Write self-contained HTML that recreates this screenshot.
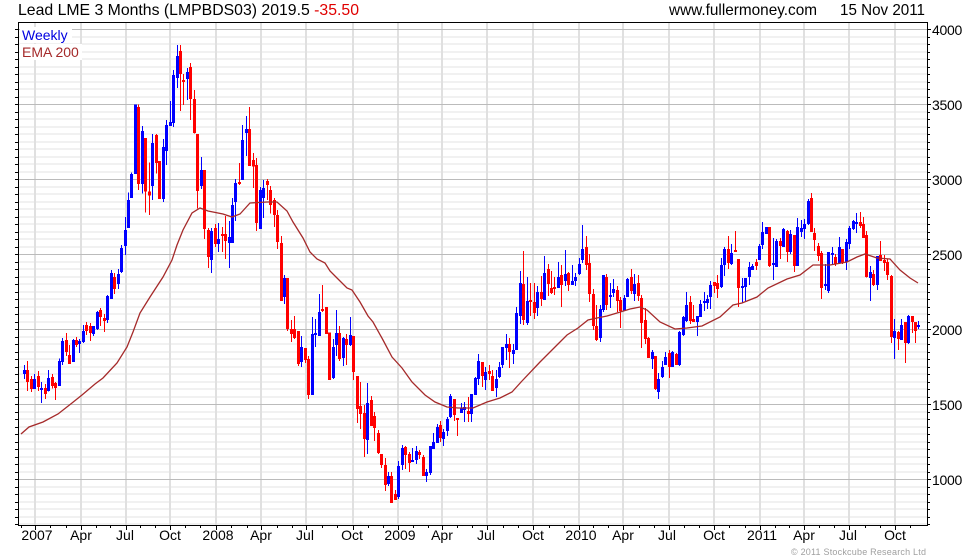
<!DOCTYPE html>
<html><head><meta charset="utf-8"><title>Lead LME 3 Months</title>
<style>
html,body{margin:0;padding:0;background:#fff}
svg{display:block}
text{font-family:"Liberation Sans",Arial,sans-serif}
</style></head><body>
<svg width="980" height="560" viewBox="0 0 980 560" xmlns="http://www.w3.org/2000/svg">
<rect width="980" height="560" fill="#fff"/>
<g shape-rendering="crispEdges" fill="none">
<path stroke="#f1f1f1" stroke-width="2" d="M19 37H927M19 44H927M19 52H927M19 59H927M19 67H927M19 74H927M19 82H927M19 89H927M19 97H927M19 112H927M19 119H927M19 127H927M19 134H927M19 142H927M19 149H927M19 157H927M19 164H927M19 172H927M19 187H927M19 194H927M19 202H927M19 209H927M19 217H927M19 224H927M19 232H927M19 239H927M19 247H927M19 262H927M19 269H927M19 277H927M19 284H927M19 292H927M19 299H927M19 307H927M19 314H927M19 322H927M19 337H927M19 344H927M19 352H927M19 359H927M19 367H927M19 374H927M19 382H927M19 389H927M19 397H927M19 412H927M19 419H927M19 427H927M19 434H927M19 442H927M19 449H927M19 457H927M19 464H927M19 472H927M19 487H927M19 494H927M19 502H927M19 509H927M19 517H927M19 524H927"/>
<path stroke="#e0e0e0" stroke-width="2" d="M35 23V525M81 23V525M126 23V525M170 23V525M216 23V525M261 23V525M306 23V525M353 23V525M398 23V525M442 23V525M487 23V525M533 23V525M579 23V525M623 23V525M669 23V525M714 23V525M760 23V525M804 23V525M849 23V525M895 23V525"/>
<path stroke="#bbb" stroke-width="1" d="M19 29.5H927M19 104.5H927M19 179.5H927M19 254.5H927M19 329.5H927M19 404.5H927M19 479.5H927"/>
</g>
<g transform="scale(.33333333) translate(.5 0)" shape-rendering="crispEdges" fill="none">
<path stroke="#f00" stroke-width="3" d="M82 1083V1173M94 1128V1176M115 1113V1173M136 1152V1197M157 1122V1165M166 1146V1200M199 999V1068M208 1035V1092M229 1011V1041M259 966V1005M271 969V1023M301 924V978M313 942V996M343 819V882M415 313V570M436 414V638M448 487V645M469 402V520M478 483V597M541 135V333M550 222V315M571 189V360M583 270V400M592 402V625M613 510V717M625 684V804M646 672V741M667 681V756M676 648V777M718 489V555M748 321V498M760 459V564M769 474V693M802 537V600M811 558V640M823 594V681M832 630V747M844 708V903M862 834V993M874 960V1026M883 948V1017M895 993V1098M916 1044V1089M925 1068V1197M967 855V936M979 921V1002M988 997V1140M1018 978V1083M1039 1002V1095M1060 1008V1140M1072 1128V1269M1081 1146V1287M1093 1215V1371M1114 1188V1278M1123 1236V1323M1135 1290V1362M1144 1362V1404M1156 1374V1473M1174 1416V1509M1186 1470V1500M1216 1338V1407M1228 1356V1416M1258 1350V1377M1270 1365V1428M1321 1263V1326M1363 1197V1263M1372 1254V1308M1405 1191V1266M1447 1086V1161M1468 1095V1140M1477 1110V1173M1528 1014V1104M1570 753V975M1591 849V948M1603 849V957M1624 828V918M1645 792V888M1654 813V882M1663 831V885M1684 795V921M1705 816V873M1759 708V810M1768 762V906M1780 867V990M1789 915V1023M1819 822V930M1852 858V936M1861 891V984M1894 807V882M1915 825V903M1924 885V1044M1936 924V1032M1945 1011V1074M1966 1068V1170M2008 1050V1134M2029 1059V1095M2071 888V972M2080 915V966M2143 846V879M2152 825V894M2185 708V807M2206 693V756M2215 777V921M2269 777V810M2308 681V801M2341 714V777M2362 690V786M2383 705V816M2434 579V696M2443 684V753M2455 729V783M2464 753V897M2506 762V798M2527 747V792M2581 636V684M2590 651V714M2599 693V832M2620 810V858M2641 723V783M2653 765V813M2662 777V840M2674 825V1029M2695 993V1050M2716 966V1089M2737 948V999M2746 966V1029"/>
<path stroke="#f00" stroke-width="9" d="M82 1110V1146M94 1137V1167M115 1128V1161M136 1164V1182M157 1131V1158M166 1149V1164M199 1020V1056M208 1065V1092M229 1020V1035M259 975V993M271 978V999M301 930V951M313 954V963M343 831V867M415 321V552M436 414V575M448 575V587M469 405V489M478 483V597M541 153V222M550 240V246M571 201V297M583 297V399M592 402V573M613 510V687M625 690V771M646 684V732M667 702V708M676 702V723M718 546V552M748 387V498M760 480V500M769 495V669M802 543V555M811 570V615M823 600V645M832 645V726M844 729V903M862 834V987M874 987V1002M883 987V1014M895 993V1092M916 1044V1080M925 1077V1185M967 927V933M979 921V1002M988 997V1140M1018 999V1077M1039 1017V1035M1060 1008V1116M1072 1128V1227M1081 1218V1242M1093 1239V1317M1114 1200V1278M1123 1248V1284M1135 1299V1359M1144 1362V1395M1156 1395V1455M1174 1428V1509M1186 1482V1500M1216 1341V1365M1228 1362V1389M1258 1356V1365M1270 1371V1428M1321 1275V1314M1363 1197V1245M1372 1254V1260M1405 1233V1242M1447 1086V1128M1468 1113V1122M1477 1128V1173M1528 1032V1056M1570 852V960M1591 900V906M1603 906V939M1624 876V897M1645 807V852M1654 864V879M1663 861V867M1684 825V855M1705 819V855M1759 741V795M1768 789V882M1780 882V978M1789 978V1020M1819 831V915M1852 870V903M1861 900V933M1894 831V873M1915 849V888M1924 894V969M1936 960V1017M1945 1014V1074M1966 1068V1167M2008 1059V1101M2029 1062V1095M2071 906V963M2080 957V966M2143 846V858M2152 849V867M2185 747V789M2206 750V756M2215 777V864M2269 786V798M2308 681V798M2341 723V738M2362 693V756M2383 705V798M2434 594V696M2443 699V720M2455 738V768M2464 759V864M2506 771V792M2527 747V789M2581 666V678M2590 672V714M2599 705V831M2620 822V855M2641 765V783M2653 780V789M2662 786V825M2674 828V1011M2695 996V1017M2716 966V1029M2737 948V966M2746 966V993"/>
<path stroke="#00f" stroke-width="3" d="M73 1095V1137M103 1122V1167M124 1146V1209M145 1110V1175M178 1075V1158M187 1014V1095M220 1017V1086M238 1017V1059M250 975V1029M280 978V1008M292 933V990M322 885V969M334 810V897M355 807V867M364 735V819M376 651V765M385 578V684M394 518V594M406 313V522M427 378V580M457 402V600M490 417V606M499 360V495M511 303V378M520 210V381M532 135V264M562 204V300M604 471V567M634 684V819M655 669V756M688 663V804M697 594V729M706 537V663M727 375V540M739 348V468M781 561V687M790 540V654M853 825V912M904 1008V1101M937 951V1185M946 957V1041M958 882V1008M1000 1017V1137M1009 930V1068M1030 1011V1098M1051 951V1038M1102 1149V1362M1165 1416V1458M1195 1383V1497M1207 1335V1410M1237 1344V1386M1249 1338V1392M1279 1407V1446M1291 1338V1425M1300 1299V1347M1312 1272V1329M1330 1287V1338M1342 1251V1308M1351 1182V1254M1384 1209V1239M1393 1206V1266M1414 1182V1266M1426 1131V1185M1435 1062V1155M1456 1101V1170M1489 1110V1191M1498 1086V1134M1507 1041V1104M1519 1002V1080M1540 1032V1092M1549 921V1050M1561 813V972M1582 831V975M1612 858V948M1633 768V900M1675 786V864M1696 750V858M1717 795V855M1726 819V858M1738 774V825M1747 675V789M1801 915V1026M1810 825V936M1831 849V924M1840 837V891M1873 885V933M1882 834V891M1903 822V903M1957 1050V1107M1975 1119V1197M1987 1083V1134M1996 1056V1095M2017 1053V1101M2038 993V1098M2050 948V1008M2059 876V966M2092 948V1008M2101 900V951M2113 876V933M2122 885V927M2131 843V927M2164 774V864M2173 741V828M2194 732V795M2227 834V909M2236 834V903M2248 786V855M2257 792V810M2278 732V780M2287 666V747M2299 681V702M2320 714V840M2329 717V801M2350 684V741M2371 690V762M2392 654V798M2404 660V711M2413 657V717M2425 597V675M2476 792V870M2485 756V879M2497 741V792M2518 711V792M2539 717V810M2548 678V747M2560 660V690M2569 639V699M2611 798V903M2632 768V870M2683 957V1077M2704 957V1020M2725 945V1032M2755 963V987"/>
<path stroke="#00f" stroke-width="9" d="M73 1110V1122M103 1137V1167M124 1164V1170M145 1134V1173M178 1083V1158M187 1023V1086M220 1020V1086M238 1023V1032M250 993V1026M280 978V1002M292 936V987M322 888V960M334 819V897M355 822V852M364 744V816M376 690V738M385 600V684M394 522V594M406 313V522M427 393V552M457 429V558M490 441V597M499 375V453M511 366V378M520 225V369M532 168V234M562 216V237M604 510V558M634 693V780M655 717V732M688 711V729M697 615V729M706 549V606M727 420V540M739 387V399M781 570V687M790 564V594M853 834V891M904 1041V1086M937 1002V1185M946 999V1005M958 936V1008M1000 1041V1134M1009 999V1035M1030 1014V1074M1051 1005V1035M1102 1209V1320M1165 1428V1452M1195 1398V1491M1207 1344V1395M1237 1380V1386M1249 1353V1380M1279 1416V1428M1291 1338V1419M1300 1326V1347M1312 1281V1329M1330 1296V1317M1342 1257V1293M1351 1188V1251M1384 1224V1239M1393 1221V1230M1414 1182V1242M1426 1134V1185M1435 1083V1137M1456 1116V1140M1489 1137V1164M1498 1101V1131M1507 1041V1095M1519 1032V1044M1540 1050V1062M1549 939V1050M1561 849V948M1582 903V969M1612 876V924M1633 819V900M1675 831V864M1696 822V843M1717 843V855M1726 831V843M1738 792V822M1747 747V780M1801 927V1014M1810 825V930M1831 885V891M1840 867V879M1873 894V933M1882 837V891M1903 852V882M1957 1056V1077M1975 1137V1176M1987 1101V1131M1996 1071V1095M2017 1056V1101M2038 996V1095M2050 951V1005M2059 915V963M2092 948V966M2101 912V951M2113 903V909M2122 897V909M2131 855V891M2164 795V861M2173 747V795M2194 759V792M2227 858V864M2236 834V861M2248 801V831M2257 798V810M2278 738V780M2287 696V735M2299 681V702M2320 789V795M2329 723V801M2350 687V741M2371 702V756M2392 681V798M2404 684V696M2413 672V687M2425 603V672M2476 852V858M2485 756V873M2497 759V765M2518 741V789M2539 726V786M2548 684V732M2560 663V687M2569 666V672M2611 816V834M2632 768V855M2683 993V1014M2704 975V1020M2725 948V1029M2755 975V981"/>
</g>
<path fill="none" stroke="#a52a2a" stroke-width="1.3" d="M21 434L29 427L43 422L58 414L72 403L82 395L95 384L103 378L117 363L127 347L133 332L140 313L150 297L163 277L172 260L177 245L183 230L192 213L200 208L208 211L223 214L232 217L240 214L250 203L267 202L277 202L287 211L293 222L303 238L310 252L317 259L325 263L330 271L337 278L347 288L352 290L360 302L368 316L373 322L383 340L392 357L402 368L412 382L425 395L435 402L447 407L458 408L473 408L487 402L500 398L512 392L522 381L540 362L557 345L567 335L578 328L588 320L597 318L607 316L617 313L630 309L640 307L647 310L660 322L675 329L687 328L702 326L720 317L733 305L742 303L757 297L768 288L787 279L800 275L813 265L830 265L847 262L857 257L865 254L877 258L890 259L900 270L910 278L918 283"/>
<g shape-rendering="crispEdges" fill="none" stroke="#000">
<path stroke-width="1" d="M18.5 22.5H927.5V525.5H18.5Z"/>
<path stroke-width="1" d="M15 29.5H18M15 37.5H18M15 44.5H18M15 52.5H18M15 59.5H18M15 67.5H18M15 74.5H18M15 82.5H18M15 89.5H18M15 97.5H18M15 104.5H18M15 112.5H18M15 119.5H18M15 127.5H18M15 134.5H18M15 142.5H18M15 149.5H18M15 157.5H18M15 164.5H18M15 172.5H18M15 179.5H18M15 187.5H18M15 194.5H18M15 202.5H18M15 209.5H18M15 217.5H18M15 224.5H18M15 232.5H18M15 239.5H18M15 247.5H18M15 254.5H18M15 262.5H18M15 269.5H18M15 277.5H18M15 284.5H18M15 292.5H18M15 299.5H18M15 307.5H18M15 314.5H18M15 322.5H18M15 329.5H18M15 337.5H18M15 344.5H18M15 352.5H18M15 359.5H18M15 367.5H18M15 374.5H18M15 382.5H18M15 389.5H18M15 397.5H18M15 404.5H18M15 412.5H18M15 419.5H18M15 427.5H18M15 434.5H18M15 442.5H18M15 449.5H18M15 457.5H18M15 464.5H18M15 472.5H18M15 479.5H18M15 487.5H18M15 494.5H18M15 502.5H18M15 509.5H18M15 517.5H18M15 524.5H18"/>
<path stroke-width="1" d="M928 29.5H931M928 37.5H930M928 44.5H930M928 52.5H930M928 59.5H930M928 67.5H930M928 74.5H930M928 82.5H930M928 89.5H930M928 97.5H930M928 104.5H931M928 112.5H930M928 119.5H930M928 127.5H930M928 134.5H930M928 142.5H930M928 149.5H930M928 157.5H930M928 164.5H930M928 172.5H930M928 179.5H931M928 187.5H930M928 194.5H930M928 202.5H930M928 209.5H930M928 217.5H930M928 224.5H930M928 232.5H930M928 239.5H930M928 247.5H930M928 254.5H931M928 262.5H930M928 269.5H930M928 277.5H930M928 284.5H930M928 292.5H930M928 299.5H930M928 307.5H930M928 314.5H930M928 322.5H930M928 329.5H931M928 337.5H930M928 344.5H930M928 352.5H930M928 359.5H930M928 367.5H930M928 374.5H930M928 382.5H930M928 389.5H930M928 397.5H930M928 404.5H931M928 412.5H930M928 419.5H930M928 427.5H930M928 434.5H930M928 442.5H930M928 449.5H930M928 457.5H930M928 464.5H930M928 472.5H930M928 479.5H931M928 487.5H930M928 494.5H930M928 502.5H930M928 509.5H930M928 517.5H930M928 524.5H930"/>
<path stroke-width="1" d="M35.5 526V530M81.5 526V530M126.5 526V530M170.5 526V530M216.5 526V530M261.5 526V530M306.5 526V530M353.5 526V530M398.5 526V530M442.5 526V530M487.5 526V530M533.5 526V530M579.5 526V530M623.5 526V530M669.5 526V530M714.5 526V530M760.5 526V530M804.5 526V530M849.5 526V530M895.5 526V530"/>
<path stroke-width="1" d="M21.5 526V528M50.5 526V528M66.5 526V528M96.5 526V528M110.5 526V528M140.5 526V528M155.5 526V528M185.5 526V528M200.5 526V528M231.5 526V528M247.5 526V528M277.5 526V528M292.5 526V528M322.5 526V528M337.5 526V528M368.5 526V528M383.5 526V528M413.5 526V528M428.5 526V528M457.5 526V528M472.5 526V528M503.5 526V528M518.5 526V528M549.5 526V528M564.5 526V528M593.5 526V528M608.5 526V528M639.5 526V528M654.5 526V528M684.5 526V528M699.5 526V528M729.5 526V528M745.5 526V528M775.5 526V528M789.5 526V528M819.5 526V528M834.5 526V528M865.5 526V528M880.5 526V528M910.5 526V528"/>
</g>
<rect x="20" y="27" width="52" height="16" fill="#fff"/>
<rect x="20" y="44" width="62" height="16" fill="#fff"/>
<text x="22" y="40" font-size="14" fill="#0000e0">Weekly</text>
<text x="22" y="57" font-size="14" fill="#a52a2a">EMA 200</text>
<text x="18" y="15" font-size="16" fill="#000" textLength="341" lengthAdjust="spacingAndGlyphs">Lead LME 3 Months (LMPBDS03) 2019.5 <tspan fill="#e00000">-35.50</tspan></text>
<text x="669" y="15" font-size="16" fill="#000" textLength="148" lengthAdjust="spacingAndGlyphs">www.fullermoney.com</text>
<text x="840" y="15" font-size="16" fill="#000" textLength="85" lengthAdjust="spacingAndGlyphs">15 Nov 2011</text>
<g font-size="14" fill="#000" letter-spacing="-.3">
<text x="932" y="35">4000</text><text x="932" y="110">3500</text><text x="932" y="185">3000</text><text x="932" y="260">2500</text><text x="932" y="335">2000</text><text x="932" y="410">1500</text><text x="932" y="485">1000</text>
</g>
<g font-size="14" fill="#000" text-anchor="middle">
<text x="37" y="540">2007</text><text x="81" y="540">Apr</text><text x="125" y="540">Jul</text><text x="170" y="540">Oct</text><text x="218" y="540">2008</text><text x="261" y="540">Apr</text><text x="305" y="540">Jul</text><text x="352" y="540">Oct</text><text x="400" y="540">2009</text><text x="442" y="540">Apr</text><text x="486" y="540">Jul</text><text x="533" y="540">Oct</text><text x="581" y="540">2010</text><text x="623" y="540">Apr</text><text x="667" y="540">Jul</text><text x="714" y="540">Oct</text><text x="762" y="540">2011</text><text x="804" y="540">Apr</text><text x="848" y="540">Jul</text><text x="895" y="540">Oct</text>
</g>
<text x="791" y="555" font-size="9" fill="#a0a0a0" textLength="135">© 2011 Stockcube Research Ltd</text>
</svg>
</body></html>
